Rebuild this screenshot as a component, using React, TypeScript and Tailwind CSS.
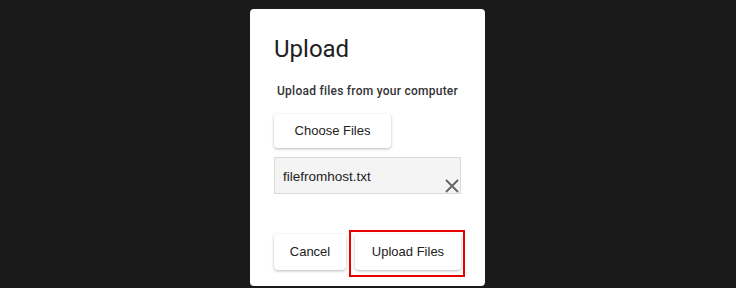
export default function App() {
  return (
    <div className="w-[736px] h-[288px] bg-[#1a1a1a] flex justify-center pr-[1px] overflow-hidden" style={{ fontFamily: 'Roboto, sans-serif' }}>
      <div className="mt-[9px] w-[235px] h-[277px] bg-white rounded-[4px] px-6 pt-6 pb-4 flex flex-col">
        {/* Title */}
        <h2 className="text-[24px] leading-[32px] font-normal text-[#212121]">Upload</h2>

        <p className="mt-[18px] pl-[3px] text-[12px] leading-[16px] tracking-[0.25px] font-medium text-[#333]">Upload files from your computer</p>

        <button className="mt-[15px] self-start w-[117px] h-[34px] bg-white rounded-[4px] shadow-[0_1px_3px_rgba(0,0,0,0.28)] text-[13px] text-[#222] font-['Liberation_Sans',Arial,sans-serif]">
          Choose Files
        </button>

        {/* Selected file */}
        <div className="relative mt-[9px] h-[37px] bg-[#f4f4f4] border border-[#d9d9d9] pl-[8px] pt-[11px] text-[13.5px] leading-[16px] text-[#222] font-['Liberation_Sans',Arial,sans-serif]">
          filefromhost.txt
          <svg width="14" height="14" viewBox="0 0 14 14" className="absolute right-[1px] bottom-0 text-[#666]">
            <path d="M1 1L13 13M13 1L1 13" stroke="currentColor" strokeWidth="2" fill="none" />
          </svg>
        </div>

        {/* Footer */}
        <div className="mt-[40px] flex items-center gap-[9px] font-['Liberation_Sans',Arial,sans-serif]">
          <button className="w-[72px] h-[36px] bg-white rounded-[4px] shadow-[0_1px_3px_rgba(0,0,0,0.28)] text-[13px] text-[#222]">
            Cancel
          </button>
          <div className="relative">
            <button className="w-[106px] h-[36px] bg-white rounded-[4px] shadow-[0_1px_3px_rgba(0,0,0,0.28)] text-[13px] text-[#222]">
              Upload Files
            </button>
            <div className="absolute left-[-6px] top-[-4px] right-[-4px] bottom-[-7px] border-2 border-[#e60000] pointer-events-none" />
          </div>
        </div>
      </div>
    </div>
  );
}
